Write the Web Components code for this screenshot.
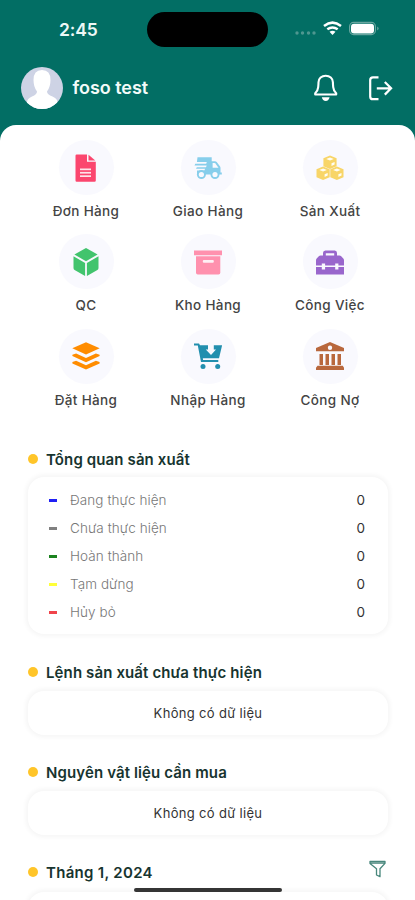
<!DOCTYPE html>
<html lang="vi">
<head>
<meta charset="utf-8">
<title>Foso</title>
<style>
html,body{margin:0;height:900px;overflow:hidden;background:#fff;font-family:Inter,"Liberation Sans",sans-serif}
</style>
</head>
<body>
<foso-app></foso-app>
<script>
function define(name, html, setup) {
  const template = document.createElement('template');
  template.innerHTML = html;
  customElements.define(name, class extends HTMLElement {
    constructor() {
      super();
      this.attachShadow({mode: 'open'}).append(template.content.cloneNode(true));
    }
    connectedCallback() { if (setup) setup(this, this.shadowRoot); }
  });
}

const icons = {
  file: ['#fb466e', '<path d="M3.5 1.7Q3.500.5 4.700.5H15v7.200h8.800v18.800q0 1.300-1.200 1.300H4.700q-1.200 0-1.200-1.300z"/><path d="M16.500.8l6.800 5.600h-6.800z"/><g fill="#fff" opacity=".85"><rect x="8" y="14.500" width="11" height="1.700"/><rect x="8" y="17.900" width="11" height="1.700"/><rect x="8" y="21.300" width="11" height="1.700"/></g>'],
  truck: ['#87ceeb', '<path d="M3.500 3.200h14.200v4h3.300q1 0 1.700.8l3.200 4.200q.6.700.6 1.700v4.600h1.300v2H3v-4.100h7.200l1-1.700H2l.8-1.500h9.200l.7-1.800H.5l.8-1.600h10.900l.6-1.700H2.900z"/><circle cx="7.400" cy="20.500" r="4.500"/><circle cx="21" cy="20.500" r="4.500"/><g fill="#f9f9fe"><circle cx="7.400" cy="20.500" r="2.600"/><circle cx="21" cy="20.500" r="2.600"/><path d="M18.600 9.100h2q.5 0 .8.400l3.100 4.200h-5.900z"/></g>'],
  boxes: ['#f8d568', '<g id="b"><path d="M14 1.500l6.600 2.700v8L14 15l-6.600-2.800v-8z"/><path fill="#fffdf4" d="M14 3.600l3.800 1.500L14 6.500l-3.800-1.400zM15.500 9.300l3.100-1.400v2.700l-3.100 1.500z"/></g><use href="#b" x="-6.900" y="11"/><use href="#b" x="6.900" y="11"/>'],
  cube: ['#42c46d', '<path d="M14 0l11.600 6.500L14 13.200 2.400 6.500z"/><path d="M1.500 8.300l11.600 6.600v13L2.600 22Q1.500 21.300 1.500 20zM26.500 8.300l-11.600 6.600v13L25.400 22q1.100-.7 1.100-2z"/>'],
  archive: ['#ff91ae', '<path d="M0 2.500h28v4.700H0zM2 8.200h24.300v16.500q0 1.800-1.800 1.800H3.800Q2 26.500 2 24.700z"/><rect x="8.800" y="12.100" width="11" height="2.700" rx="1" fill="#fff0f5"/>'],
  toolbox: ['#9966cc', '<path fill-rule="evenodd" d="M7 7.500V5q0-2.500 2.400-2.500h9.400Q21 2.500 21 5v2.500h2.500q1 0 1.700.8l2.100 2.300q.7.800.7 1.800v5.100h-5.600v-2h-3.200v2H9.100v-2H5.800v2H0v-5.100q0-1 .7-1.800l2.100-2.300q.7-.8 1.700-.8zm2.800 0h8.400V5.300H9.800z"/><path d="M0 19h5.800v2.500h3.300V19h10.100v2.500h3.200V19H28v7.500H0z"/>'],
  layers: ['#ff8c00', '<path d="M14 .2l13.700 6.100L14 12.500.3 6.300z"/><path id="l" d="M.4 12.700l3.700-1.300L14 16l9.900-4.600 3.700 1.300v1.400L14 20.300.4 14.100z"/><use href="#l" y="7.300"/>'],
  cart: ['#228fae', '<path d="M0 1.500h5l1 1.800h8v4.300H11.800L17 13l5-5.400h-2.200V3.300h8.300L25 16.300H8.800l.3 1.800h15.200v2H7L3.800 3.500H0z"/><circle cx="9" cy="24.500" r="2.500"/><circle cx="23.700" cy="24.500" r="2.500"/>'],
  bank: ['#b9683d', '<path fill-rule="evenodd" d="M14 0l14 5.900v3.300H0V5.900zm0 3.600a2.200 2.200 0 100 4.400 2.200 2.200 0 000-4.400z"/><path d="M3.500 12H7v11H3.500zM9.500 12H13v11H9.500zM15.500 12H19v11h-3.500zM21.500 12H25v11h-3.500zM1.500 23.800h25.300l1.200 2V28H0v-2.200z"/>']
};

define('phone-status', `
<style>
:host{display:grid;grid-template-columns:147px 121px 147px;height:58px;align-items:center}
.time{padding-left:59px;font-size:17.500px;font-weight:600;letter-spacing:-.1px;color:#edf8f6}
.island{height:35px;border-radius:18px;background:#000}
svg{display:block}
</style>
<div class="time">2:45</div><div class="island"></div>
<svg width="147" height="58" viewBox="268 0 147 58">
<g fill="#4f9790"><circle cx="297" cy="33" r="1.700"/><circle cx="302.500" cy="33" r="1.700"/><circle cx="308.500" cy="33" r="1.700"/><circle cx="314" cy="33" r="1.700"/></g>
<g fill="none" stroke="#fff" stroke-width="2.500"><path d="M324 26q8.500-6.800 17 0"/><path d="M327.300 29.300q5.200-3.700 10.400 0"/></g><path fill="#fff" d="M329.500 31.800q3-1.900 6 0l-3 3.300z"/>
<rect x="349.600" y="22.400" width="25.800" height="12.200" rx="4" fill="none" stroke="#68a59f" stroke-width="1.200"/><rect x="351" y="23.700" width="23" height="9.800" rx="3" fill="#fff"/><path d="M377.200 26.500q3 2 0 4z" fill="#68a59f"/>
</svg>`);

define('user-bar', `
<style>
:host{display:flex;height:67px;padding:9px 21px 0 21px;box-sizing:border-box;align-items:flex-start}
.name{flex:1;padding:9px 0 0 9.500px;line-height:24px;font-size:18px;font-weight:600;color:#f3fbf9;letter-spacing:-.05px}
svg{display:block}.tools{display:flex;gap:28px;padding:7px 0 0}
</style>
<svg width="42" height="42" viewBox="0 0 42 42"><defs><clipPath id="c"><circle cx="21" cy="21" r="21"/></clipPath></defs><g clip-path="url(#c)"><rect width="42" height="42" fill="#ced3e5"/><path fill="#fff" d="M12.500 13q0-10 8.500-10t8.500 10q0 7-3.500 11.500 0 3 5.500 5 5 2 5 6V42H6v-6.500q0-4 5-6 5-2 5-5Q12.500 20 12.500 13z"/></g></svg>
<div class="name"><slot></slot></div>
<div class="tools">
<svg width="26" height="28" viewBox="313 74 26 28"><path d="M315.200 94.500v-1.200q2.600-2.200 3-6.100.3-3 .3-4.900c0-4 3.200-6.600 7.200-6.600s7.200 2.600 7.200 6.600q0 1.900.3 4.900.4 3.900 3 6.100v1.200z" fill="none" stroke="#fff" stroke-width="2.100" stroke-linejoin="round"/><path fill="#fff" d="M321.800 97.200h7.800q-.8 3.700-3.900 3.700t-3.900-3.700z"/></svg>
<svg width="27" height="28" viewBox="367 74 27 28"><path d="M378.500 77.300h-5.500q-2.800 0-2.800 2.800v16.300q0 2.800 2.800 2.800h5.500M376.800 88.300h14.300M384.800 82l6.300 6.300-6.300 6.300" fill="none" stroke="#fff" stroke-width="2.200"/></svg>
</div>`);

define('menu-item', `
<style>
:host{display:flex;flex-direction:column;align-items:center;height:94.300px}
.disc{width:55px;height:55px;border-radius:50%;background:#f9f9fe;display:grid;place-items:center}
svg{display:block}
.label{margin-top:8px;line-height:17px;font-size:13.500px;font-weight:500;letter-spacing:.35px;color:#444;white-space:nowrap}
</style>
<div class="disc"><svg width="28" height="28" viewBox="0 0 28 28"></svg></div><div class="label"><slot></slot></div>`,
(host, root) => {
  const [color, art] = icons[host.getAttribute('icon')];
  const svg = root.querySelector('svg');
  svg.setAttribute('fill', color);
  svg.innerHTML = art;
});

define('section-title', `
<style>
:host{display:flex;align-items:center;height:24px;padding-right:1px}
i{width:10px;height:10px;border-radius:50%;background:#ffc529;margin-right:8px}
.t{flex:1;font-size:15px;font-weight:600;color:#17342f;letter-spacing:var(--track,.12px);white-space:nowrap}
</style><i></i><div class="t"><slot></slot></div><slot name="tool"></slot>`);

define('filter-icon', `
<style>:host{display:block;margin-top:-5px}svg{display:block}</style>
<svg width="19" height="19" viewBox="0 0 19 19"><path d="M2 1.500h15v1.900l-5 5.300v8L8.500 15V8.700L2 3.400zM2 3.200h15" fill="none" stroke="#48877c" stroke-width="1.300" stroke-linejoin="round"/></svg>`);

define('soft-card', `
<style>
:host{display:block;box-sizing:border-box;border-radius:16px;background:#fff;box-shadow:0 0 5px 2px rgba(0,0,0,.045)}
</style><slot></slot>`);

define('status-row', `
<style>
:host{display:flex;align-items:center;height:28px;padding:0 23px 0 21px;font-size:13.500px}
i{width:8px;height:3px;background:var(--tone);margin-right:13px}
.k{flex:1;color:#777;font-weight:300;letter-spacing:.08px}.n{color:#333}
</style><i></i><div class="k"><slot></slot></div><div class="n">0</div>`,
(host) => host.style.setProperty('--tone', host.getAttribute('tone')));

define('empty-note', `
<style>:host{display:grid;place-items:center;height:100%;font-size:13px;color:#333;letter-spacing:.32px}</style><div><slot></slot></div>`);

define('foso-app', `
<style>
:host{display:block;position:relative;width:415px;height:900px;overflow:hidden;background:#026e64}
main{height:775px;background:#fff;border-radius:16px 16px 0 0;padding:15px 25px 0;box-sizing:border-box}
.menu{display:grid;grid-template-columns:repeat(3,122px);align-content:start;height:307px}
.body{padding:0 2px 0 3px}
.a{height:157px;margin:6px 0 26px;padding-top:9px}
.b{height:44px;margin:7px 0 25px}
.c{height:44px;margin:7px 0 25px}
.d{height:40px;margin-top:8px}
.month{--track:.3px}
.home{position:absolute;left:134px;top:887.500px;width:148px;height:4.500px;border-radius:3px;background:#353535}
</style>
<phone-status></phone-status>
<user-bar>foso test</user-bar>
<main>
<div class="menu">
<menu-item icon="file">Đơn Hàng</menu-item><menu-item icon="truck">Giao Hàng</menu-item><menu-item icon="boxes">Sản Xuất</menu-item>
<menu-item icon="cube">QC</menu-item><menu-item icon="archive">Kho Hàng</menu-item><menu-item icon="toolbox">Công Việc</menu-item>
<menu-item icon="layers">Đặt Hàng</menu-item><menu-item icon="cart">Nhập Hàng</menu-item><menu-item icon="bank">Công Nợ</menu-item>
</div>
<div class="body">
<section-title>Tổng quan sản xuất</section-title>
<soft-card class="a">
<status-row tone="#2020f4">Đang thực hiện</status-row><status-row tone="#808080">Chưa thực hiện</status-row><status-row tone="#1b831f">Hoàn thành</status-row><status-row tone="#ffff38">Tạm dừng</status-row><status-row tone="#f0444b">Hủy bỏ</status-row>
</soft-card>
<section-title>Lệnh sản xuất chưa thực hiện</section-title>
<soft-card class="b"><empty-note>Không có dữ liệu</empty-note></soft-card>
<section-title>Nguyên vật liệu cần mua</section-title>
<soft-card class="c"><empty-note>Không có dữ liệu</empty-note></soft-card>
<section-title class="month">Tháng 1, 2024<filter-icon slot="tool"></filter-icon></section-title>
<soft-card class="d"></soft-card>
</div>
</main>
<div class="home"></div>`);
</script>
</body>
</html>
